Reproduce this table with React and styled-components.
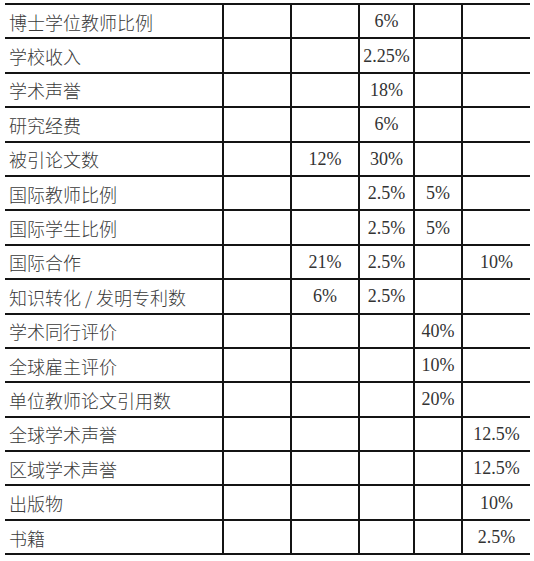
import React from 'react';
import styled, { createGlobalStyle } from 'styled-components';

const GlobalStyle = createGlobalStyle`
  html, body {
    margin: 0;
    padding: 0;
    background: #fff;
  }
`;

const Page = styled.div`
  padding: 3px 0 0 5px;
  width: 534px;
  height: 561px;
  box-sizing: border-box;
  background: #fff;
`;

const Grid = styled.div`
  display: grid;
  grid-template-columns: 217px 68px 68px 55px 48px 69px;
  grid-auto-rows: 34.4px;
  border-top: 2px solid #141414;
  width: 525px;
`;

const Cell = styled.div`
  box-sizing: border-box;
  border-bottom: 2px solid #141414;
  border-left: ${(p) => (p.first ? 'none' : '2px solid #141414')};
  display: flex;
  align-items: center;
  justify-content: ${(p) => (p.first ? 'flex-start' : 'center')};
  padding-left: ${(p) => (p.first ? '4px' : '0')};
  padding-top: 1px;
  font-family: ${(p) =>
    p.first
      ? '"Noto Sans CJK SC", sans-serif'
      : '"Liberation Serif", "Times New Roman", serif'};
  font-size: 18px;
  font-weight: ${(p) => (p.first ? 300 : 400)};
  color: ${(p) => (p.first ? '#3a3a3a' : '#333')};
  white-space: nowrap;
`;

const rows = [
  ['博士学位教师比例', '', '', '6%', '', ''],
  ['学校收入', '', '', '2.25%', '', ''],
  ['学术声誉', '', '', '18%', '', ''],
  ['研究经费', '', '', '6%', '', ''],
  ['被引论文数', '', '12%', '30%', '', ''],
  ['国际教师比例', '', '', '2.5%', '5%', ''],
  ['国际学生比例', '', '', '2.5%', '5%', ''],
  ['国际合作', '', '21%', '2.5%', '', '10%'],
  ['知识转化 / 发明专利数', '', '6%', '2.5%', '', ''],
  ['学术同行评价', '', '', '', '40%', ''],
  ['全球雇主评价', '', '', '', '10%', ''],
  ['单位教师论文引用数', '', '', '', '20%', ''],
  ['全球学术声誉', '', '', '', '', '12.5%'],
  ['区域学术声誉', '', '', '', '', '12.5%'],
  ['出版物', '', '', '', '', '10%'],
  ['书籍', '', '', '', '', '2.5%']
];

const App = () => (
  <Page>
    <GlobalStyle />
    <Grid>
      {rows.map((row, r) =>
        row.map((value, c) => (
          <Cell key={`${r}-${c}`} first={c === 0}>
            {value}
          </Cell>
        ))
      )}
    </Grid>
  </Page>
);

export default App;
